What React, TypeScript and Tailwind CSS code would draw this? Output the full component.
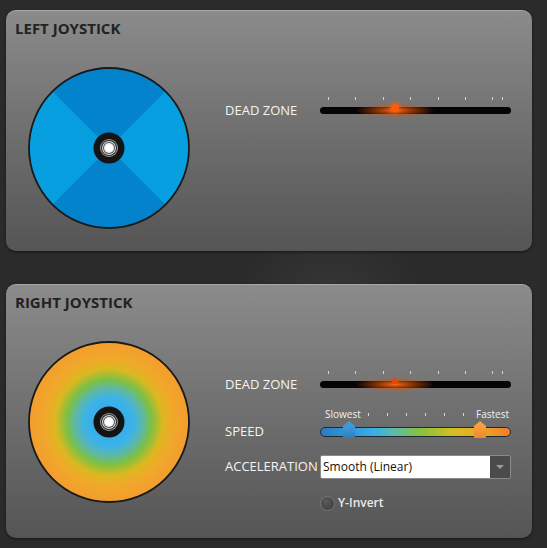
import React from "react";

const FONT = { fontFamily: '"Open Sans", "Liberation Sans", sans-serif' };

function BlueStick() {
  return (
    <svg viewBox="0 0 162 162" className="h-full w-full">
      <defs>
        <clipPath id="lclip">
          <circle cx="81" cy="81" r="80" />
        </clipPath>
      </defs>
      <g clipPath="url(#lclip)">
        <rect width="162" height="162" fill="#079fdf" />
        <polygon points="0,0 162,0 81,81" fill="#0383cb" />
        <polygon points="0,162 162,162 81,81" fill="#0383cb" />
      </g>
      <circle cx="81" cy="81" r="80" fill="none" stroke="#1a1a1a" strokeWidth="1.8" />
      <StickCap />
    </svg>
  );
}

function RainbowStick() {
  return (
    <svg viewBox="0 0 162 162" className="h-full w-full">
      <defs>
        <radialGradient id="rgrad" cx="50%" cy="50%" r="50%">
          <stop offset="0%" stopColor="#2ea8e8" />
          <stop offset="30%" stopColor="#3cb2ea" />
          <stop offset="42%" stopColor="#5cb8a8" />
          <stop offset="53%" stopColor="#7cc044" />
          <stop offset="67%" stopColor="#dcb820" />
          <stop offset="80%" stopColor="#f0a82a" />
          <stop offset="100%" stopColor="#f39d2e" />
        </radialGradient>
      </defs>
      <circle cx="81" cy="81" r="80" fill="url(#rgrad)" stroke="#1a1a1a" strokeWidth="1.8" />
      <StickCap />
    </svg>
  );
}

function StickCap() {
  return (
    <g>
      <circle cx="81" cy="81" r="15.5" fill="#141414" />
      <circle cx="81" cy="81" r="9" fill="#9a9a9a" />
      <circle cx="81" cy="81" r="8" fill="#2a2a2a" />
      <circle cx="81" cy="81" r="7" fill="#d8d8d8" />
      <circle cx="81" cy="81" r="6" fill="#555" />
      <circle cx="81" cy="81" r="5" fill="#eee" />
      <circle cx="81" cy="81" r="3.6" fill="#fff" />
    </g>
  );
}

function Tick() {
  return <span className="h-[3px] w-px shrink-0 bg-[#d4d4d4]" />;
}

function DeadZone({ pointer }: { pointer: "dot" | "arrow" }) {
  return (
    <div className="flex w-[191px] flex-col">
      {/* scale ticks */}
      <div className="flex h-[12px] items-start gap-[26.4px] pl-[8px] pt-[2px]">
        <Tick />
        <Tick />
        <Tick />
        <Tick />
        <Tick />
        <Tick />
        <Tick />
        <span className="-ml-[18px] h-[3px] w-px bg-[#d4d4d4]" />
      </div>
      {/* track */}
      <div className="relative h-[7px] rounded-full bg-[#050505]">
        <div className="absolute left-[35px] top-[-4px] h-[15px] w-[80px] bg-[radial-gradient(ellipse_at_center,rgba(255,110,20,0.95)_0%,rgba(220,80,10,0.55)_35%,rgba(120,40,0,0)_70%)]" />
        {pointer === "dot" ? (
          <span className="absolute left-[71px] top-[-3px] h-[8px] w-[8px] rounded-full bg-[#ff5a0a] shadow-[0_0_4px_2px_rgba(255,100,20,0.6)]" />
        ) : (
          <span className="absolute left-[70px] top-[-4px] h-0 w-0 border-x-[5px] border-b-[7px] border-x-transparent border-b-[#e04a08]" />
        )}
      </div>
      <div className="h-[12px]" />
    </div>
  );
}

function Thumb({ left, from, to }: { left: number; from: string; to: string }) {
  return (
    <div className="absolute top-[-3px] flex w-[12px] flex-col items-center" style={{ left }}>
      <span
        className="h-0 w-0 border-x-[6px] border-b-[5px] border-x-transparent"
        style={{ borderBottomColor: from }}
      />
      <span
        className="h-[12px] w-[12px] rounded-b-[1px]"
        style={{ background: `linear-gradient(${from}, ${to})` }}
      />
    </div>
  );
}

function Speed() {
  return (
    <div className="w-[191px]">
      {/* Slowest / ticks / Fastest */}
      <div className="flex h-[24px] items-center pl-[5px] pt-[4px] text-[10px] leading-[12px] text-[#f0f0f0]">
        <span className="w-[43px]">Slowest</span>
        <div className="flex w-[108px] items-center gap-[18px]">
          <Tick />
          <Tick />
          <Tick />
          <Tick />
          <Tick />
          <Tick />
        </div>
        <span>Fastest</span>
      </div>
      <div className="relative flex h-[16px] items-center">
        <div className="h-[10px] w-full rounded-full border border-[#1e2a33] bg-[linear-gradient(90deg,#2a7cc4_0%,#3aaee8_28%,#60bca0_40%,#84c240_52%,#d6be22_70%,#eaa826_84%,#f27c2c_100%)]" />
        <Thumb left={23} from="#3f9ad8" to="#2a7fc0" />
        <Thumb left={154} from="#f6a040" to="#ee8a2a" />
      </div>
    </div>
  );
}

function Panel({
  title,
  height,
  stick,
  children,
}: {
  title: string;
  height: string;
  stick: React.ReactNode;
  children: React.ReactNode;
}) {
  return (
    <section
      className={`w-[526px] ${height} rounded-[10px] border-t border-[#a9a9a9] bg-gradient-to-b from-[#8b8b8b] to-[#555555] shadow-[0_1px_3px_rgba(0,0,0,0.5)]`}
    >
      <h2 className="pl-[9px] pt-[7px] text-[15px] font-bold leading-[20px] text-[#222]">{title}</h2>
      <div className="mt-[29px] flex">
        <div className="ml-[22px] h-[162px] w-[162px] shrink-0">{stick}</div>
        <div className="ml-[35px] grid grid-cols-[95px_191px] content-start pt-[28px] text-[13px] text-[#f4f4f4]">
          {children}
        </div>
      </div>
    </section>
  );
}

export default function App() {
  return (
    <div
      className="flex min-h-[548px] flex-col gap-[33px] bg-[#2b2b2b] bg-[radial-gradient(ellipse_90px_60px_at_330px_290px,#363636_0%,#2b2b2b_100%)] pl-[6px] pt-[10px]"
      style={FONT}
    >
      <Panel title="LEFT JOYSTICK" height="h-[241px]" stick={<BlueStick />}>
        <div className="flex items-center">DEAD ZONE</div>
        <DeadZone pointer="dot" />
      </Panel>

      <Panel title="RIGHT JOYSTICK" height="h-[254px]" stick={<RainbowStick />}>
        <div className="flex items-center">DEAD ZONE</div>
        <DeadZone pointer="arrow" />

        <div className="flex items-end">
          <div className="flex h-[16px] items-center">SPEED</div>
        </div>
        <Speed />

        <div className="mt-[15px] flex h-[24px] items-center">ACCELERATION</div>
        <div className="mt-[15px] flex h-[24px] w-[191px] overflow-hidden rounded-[2px] border border-[#8a8a8a]">
          <div className="flex flex-1 items-center bg-white pl-[2px] text-[12px] text-[#111]">Smooth (Linear)</div>
          <div className="flex w-[20px] items-center justify-center bg-[#4b4b4b]">
            <span className="h-0 w-0 border-x-[4px] border-t-[4px] border-x-transparent border-t-[#9a9a9a]" />
          </div>
        </div>

        <div />
        <label className="mt-[16px] flex h-[16px] items-center gap-[3px] text-[12px] font-semibold text-[#eaeaea]">
          <span className="h-[15px] w-[15px] rounded-full border border-[#777] bg-[radial-gradient(circle_at_40%_35%,#5a5a5a,#3a3a3a)]" />
          Y-Invert
        </label>
      </Panel>
    </div>
  );
}
